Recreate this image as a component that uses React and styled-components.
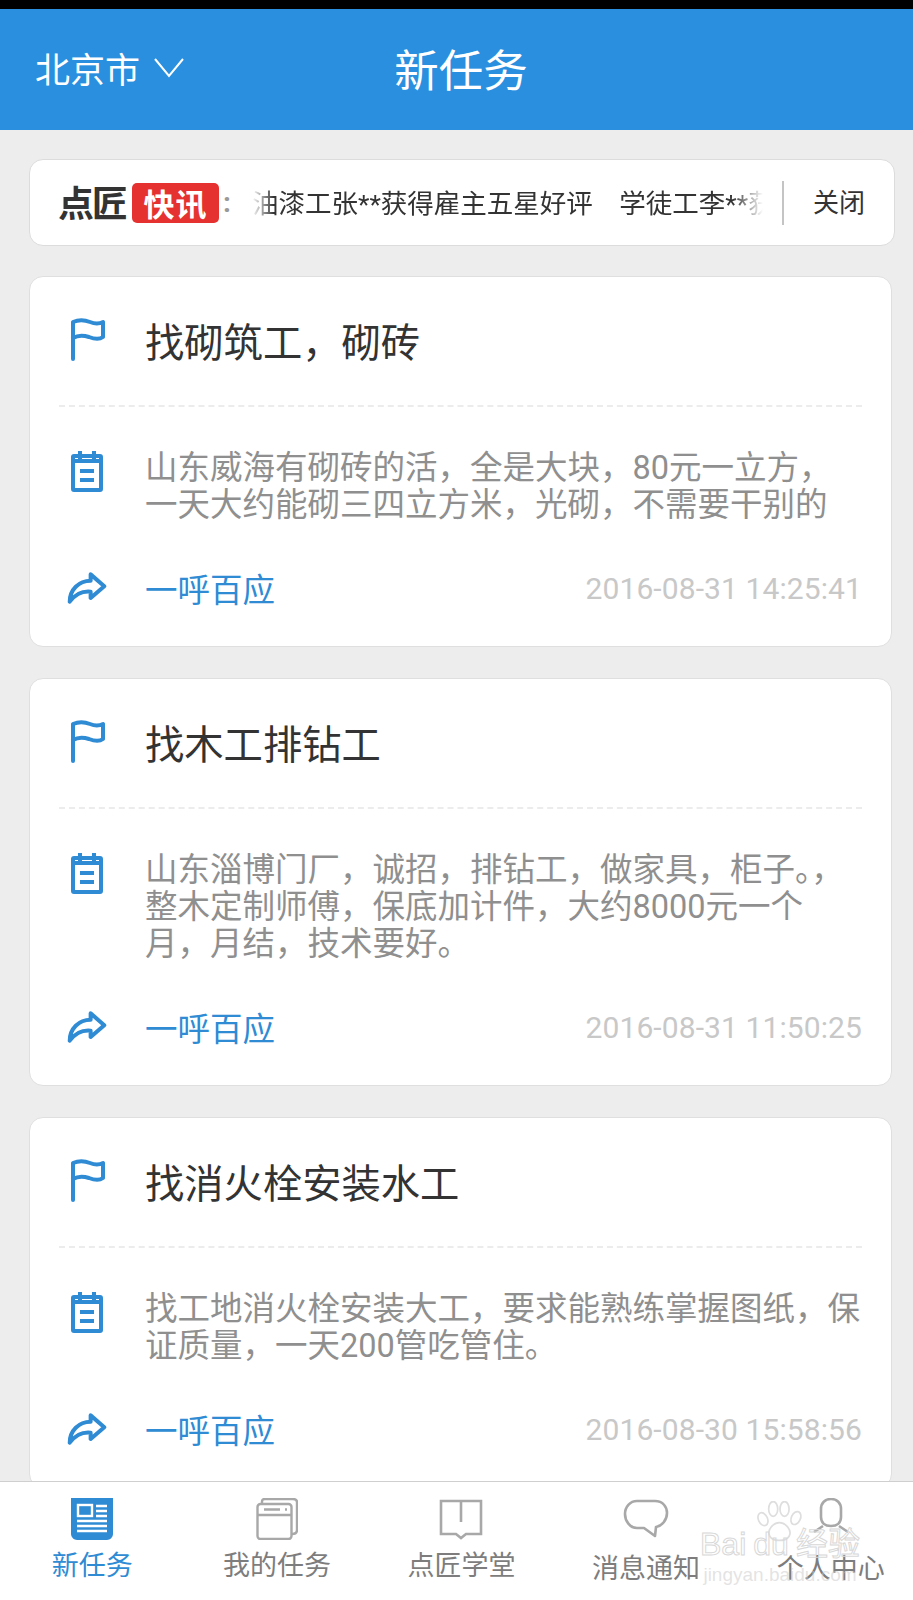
import styled, { createGlobalStyle } from 'styled-components';

const tasks = [
  {
    title: '找砌筑工，砌砖',
    desc: '山东威海有砌砖的活，全是大块，80元一立方，\n一天大约能砌三四立方米，光砌，不需要干别的',
    time: '2016-08-31 14:25:41',
  },
  {
    title: '找木工排钻工',
    desc: '山东淄博门厂，诚招，排钻工，做家具，柜子。，\n整木定制师傅，保底加计件，大约8000元一个\n月，月结，技术要好。',
    time: '2016-08-31 11:50:25',
  },
  {
    title: '找消火栓安装水工',
    desc: '找工地消火栓安装大工，要求能熟练掌握图纸，保\n证质量，一天200管吃管住。',
    time: '2016-08-30 15:58:56',
  },
];

const FlagIcon = () => (
  <svg width="40" height="44" viewBox="0 0 40 44" fill="none" stroke="#2f8bd4" strokeWidth="4" strokeLinecap="round" strokeLinejoin="round">
    <path d="M6 42V5C13 2 18 3 23 5C28 7 32 7 36 5V20C32 23 27 22 22 20C16 18 11 18 6 21" />
  </svg>
);

const NoteIcon = () => (
  <svg width="40" height="42" viewBox="0 0 40 42" fill="none" stroke="#2f8bd4" strokeWidth="4">
    <rect x="6" y="6" width="28" height="34" rx="1" />
    <path d="M13 1V10M27 1V10M6 11H34" />
    <path d="M13 21H27M13 30H27" />
  </svg>
);

const ShareIcon = () => (
  <svg width="44" height="36" viewBox="0 0 44 36" fill="none" stroke="#2f8bd4" strokeWidth="4.4" strokeLinejoin="round" strokeLinecap="round">
    <path d="M26 3L41 16L26 29V22C16 21 9 25 3 33C3 20 13 10 26 10Z" />
  </svg>
);

const NewsIcon = () => (
  <svg width="42" height="42" viewBox="0 0 42 42">
    <path d="M0 0H42V36C42 39 39 42 36 42H6C3 42 0 39 0 36Z" fill="#2f8bd4" />
    <rect x="7" y="7" width="14" height="11" fill="none" stroke="#fff" strokeWidth="2.4" />
    <path d="M25 8H36M25 13H36M25 18H36M6 23H36M6 28H36M6 33H36" stroke="#fff" strokeWidth="2.4" />
  </svg>
);

const WindowIcon = () => (
  <svg width="42" height="42" viewBox="0 0 42 42" fill="none" stroke="#a8a8a8" strokeWidth="2.4">
    <rect x="1.5" y="6" width="34" height="35" rx="3" />
    <path d="M1.5 17H35.5M8 11.5H24M29 11.5H31" />
    <path d="M6 6V4C6 2 7 1 9 1H37C39 1 41 2 41 4V32C41 34 40 36 36 36" />
  </svg>
);

const BookIcon = () => (
  <svg width="44" height="42" viewBox="0 0 44 42" fill="none" stroke="#a8a8a8" strokeWidth="2.6">
    <path d="M2 3H42V36H27L22 40L17 36H2Z" />
    <path d="M22 3V24" />
  </svg>
);

const BubbleIcon = () => (
  <svg width="46" height="42" viewBox="0 0 46 42" fill="none" stroke="#a8a8a8" strokeWidth="2.6" strokeLinejoin="round">
    <path d="M14 3H32C40 3 44 9 44 15C44 22 39 28 33 29L32 38L21 30H14C7 30 2 23 2 16C2 9 7 3 14 3Z" />
  </svg>
);

const PersonIcon = () => (
  <svg width="46" height="42" viewBox="0 0 46 42" fill="none" stroke="#a8a8a8" strokeWidth="2.6">
    <path d="M23 1C29 1 33 5 33 11V19C33 25 29 28 23 28C17 28 13 25 13 19V11C13 5 17 1 23 1Z" />
    <path d="M15 28L6 34M31 28L40 34" />
  </svg>
);

const PawIcon = () => (
  <svg width="50" height="42" viewBox="0 0 88 74" fill="none" stroke="#dedede" strokeWidth="3">
    <ellipse cx="14" cy="32" rx="8" ry="12" transform="rotate(-25 14 32)" />
    <ellipse cx="32" cy="14" rx="8" ry="13" />
    <ellipse cx="52" cy="14" rx="8" ry="13" />
    <ellipse cx="72" cy="30" rx="8" ry="12" transform="rotate(25 72 30)" />
    <path d="M43 38C32 38 20 52 26 62C32 72 54 72 60 62C66 52 54 38 43 38Z" />
  </svg>
);

const tabs = [
  { label: '新任务', icon: <NewsIcon />, active: true },
  { label: '我的任务', icon: <WindowIcon /> },
  { label: '点匠学堂', icon: <BookIcon /> },
  { label: '消息通知', icon: <BubbleIcon />, low: true },
  { label: '个人中心', icon: <PersonIcon />, low: true },
];

const TaskCard = ({ task }) => (
  <Card>
    <TitleRow>
      <IconSlot><FlagIcon /></IconSlot>
      <CardTitle>{task.title}</CardTitle>
    </TitleRow>
    <Body>
      <IconSlot><NoteIcon /></IconSlot>
      <Desc>{task.desc}</Desc>
    </Body>
    <Footer>
      <IconSlot><ShareIcon /></IconSlot>
      <LinkText>一呼百应</LinkText>
      <Time>{task.time}</Time>
    </Footer>
  </Card>
);

export default function App() {
  return (
    <Screen>
      <GlobalStyle />
      <StatusBar />
      <Header>
        <City>
          北京市
          <svg width="32" height="22" viewBox="0 0 32 22" fill="none" stroke="#fff" strokeWidth="2">
            <path d="M2 2L16 19L30 2" />
          </svg>
        </City>
        <HeaderTitle>新任务</HeaderTitle>
      </Header>
      <Content>
        <Notice>
          <Brand>点匠</Brand>
          <Badge>快讯</Badge>
          <Colon>:</Colon>
          <Ticker>油漆工张**获得雇主五星好评　学徒工李**获得雇主五星好评</Ticker>
          <CloseButton>关闭</CloseButton>
        </Notice>
        {tasks.map((task) => (
          <TaskCard key={task.time} task={task} />
        ))}
      </Content>
      <TabBar>
        {tabs.map((tab) => (
          <Tab key={tab.label}>
            <TabIcon>{tab.icon}</TabIcon>
            <TabLabel $active={tab.active} $low={tab.low}>{tab.label}</TabLabel>
          </Tab>
        ))}
      </TabBar>
      <Watermark>
        <PawIcon />
        <MarkLine>
          <span>Bai</span>
          <span>du</span>
          <span>经验</span>
        </MarkLine>
        <MarkUrl>jingyan.baidu.com</MarkUrl>
      </Watermark>
    </Screen>
  );
}

const GlobalStyle = createGlobalStyle`
  html, body {
    margin: 0;
    padding: 0;
    background: #ededee;
  }
  * {
    box-sizing: border-box;
  }
`;

const Screen = styled.div`
  position: relative;
  width: 913px;
  height: 1600px;
  display: flex;
  flex-direction: column;
  overflow: hidden;
  background: #ededee;
  font-family: Roboto, "Noto Sans CJK SC", sans-serif;
`;

const StatusBar = styled.div`
  height: 9px;
  flex: none;
  background: #000;
`;

const Header = styled.header`
  height: 121px;
  flex: none;
  display: grid;
  grid-template-columns: 1fr auto 1fr;
  align-items: center;
  padding: 0 35px 4px;
  background: #2a8fdf;
  color: #fff;
`;

const City = styled.div`
  display: flex;
  align-items: center;
  gap: 13px;
  font-size: 35px;
`;

const HeaderTitle = styled.h1`
  margin: 0 0 0 9px;
  font-size: 44.5px;
  font-weight: 400;
`;

const Content = styled.main`
  flex: 1;
  min-height: 0;
  overflow: hidden;
  display: flex;
  flex-direction: column;
  gap: 31px;
  padding: 29px 21px 0 29px;
`;

const Notice = styled.div`
  flex: none;
  width: 866px;
  height: 87px;
  margin-bottom: -1px;
  display: flex;
  align-items: center;
  padding: 0 28px;
  background: #fff;
  border: 1px solid #dcdcdc;
  border-radius: 14px;
`;

const Brand = styled.span`
  width: 74px;
  margin-top: -4px;
  font-size: 36px;
  font-weight: 700;
  color: #333;
  letter-spacing: -2px;
`;

const Badge = styled.span`
  width: 87px;
  height: 40px;
  display: flex;
  align-items: center;
  justify-content: center;
  background: #e5312f;
  border-radius: 5px;
  color: #fff;
  font-size: 31px;
  font-weight: 700;
  letter-spacing: 1px;
`;

const Colon = styled.span`
  width: 33px;
  padding-left: 4px;
  font-size: 28px;
  font-weight: 700;
  color: #999;
`;

const Ticker = styled.div`
  width: 511px;
  overflow: hidden;
  white-space: nowrap;
  font-size: 26.5px;
  line-height: 36px;
  color: #333;
  margin-top: 2px;
  mask-image: linear-gradient(90deg, transparent 0, #000 22px, #000 480px, transparent 100%);
`;

const CloseButton = styled.span`
  flex: none;
  height: 44px;
  margin-left: 19px;
  padding-left: 29px;
  border-left: 2px solid #c4c4c4;
  line-height: 44px;
  font-size: 26px;
  color: #333;
`;

const Card = styled.article`
  flex: none;
  padding: 0 29px;
  background: #fff;
  border: 1px solid #dfdfdf;
  border-radius: 14px;
`;

const TitleRow = styled.div`
  height: 130px;
  display: flex;
  align-items: center;
  gap: 38px;
  padding: 0 0 4px 8px;
  border-bottom: 2px dashed #ececec;
`;

const IconSlot = styled.div`
  flex: none;
  width: 40px;
  display: flex;
  justify-content: center;
`;

const CardTitle = styled.h2`
  margin: 0;
  font-size: 39.3px;
  font-weight: 400;
  color: #333;
`;

const Body = styled.div`
  display: flex;
  align-items: flex-start;
  gap: 38px;
  padding: 43px 0 0 8px;
`;

const Desc = styled.p`
  margin: 0;
  font-size: 32.5px;
  line-height: 37px;
  color: #8f8f8f;
  white-space: pre;
`;

const Footer = styled.div`
  height: 64px;
  margin: 32px 0 26px;
  display: flex;
  align-items: center;
  gap: 38px;
  padding-left: 8px;
`;

const LinkText = styled.span`
  margin-top: -2px;
  font-size: 32.5px;
  color: #2f8bd4;
`;

const Time = styled.span`
  margin-left: auto;
  font-size: 30px;
  letter-spacing: 0.1px;
  color: #c8c8c8;
`;

const TabBar = styled.nav`
  flex: none;
  height: 119px;
  display: grid;
  grid-template-columns: repeat(5, 184.6px);
  background: #fff;
  border-top: 1px solid #cfcfcf;
`;

const Tab = styled.div`
  display: flex;
  flex-direction: column;
  align-items: center;
  padding-top: 16px;
`;

const TabIcon = styled.div`
  height: 42px;
  display: flex;
  align-items: center;
`;

const TabLabel = styled.span`
  margin-top: ${(props) => (props.$low ? '7px' : '4px')};
  font-size: 27px;
  white-space: nowrap;
  color: ${(props) => (props.$active ? '#2f8bd4' : '#7d7d7d')};
`;

const Watermark = styled.div`
  position: absolute;
  left: 700px;
  top: 1501px;
  width: 160px;
  display: flex;
  flex-direction: column;
  align-items: center;
  pointer-events: none;
  color: transparent;
`;

const MarkLine = styled.div`
  width: 100%;
  margin-top: -16px;
  display: flex;
  justify-content: space-between;
  font-size: 32px;
  line-height: 34px;
  white-space: nowrap;
  font-family: "Liberation Sans", "Noto Sans CJK SC", sans-serif;
  -webkit-text-stroke: 1px #d8d8d8;
`;

const MarkUrl = styled.div`
  margin-top: 4px;
  font-size: 19px;
  line-height: 20px;
  color: rgba(200, 200, 200, 0.5);
  font-family: "Liberation Sans", sans-serif;
`;
